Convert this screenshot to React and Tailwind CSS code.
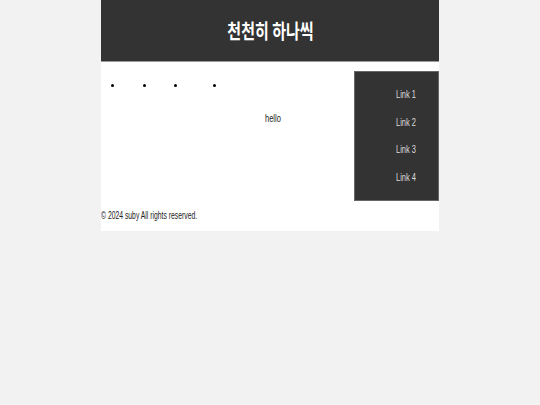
export default function App() {
  const narrow = { fontFamily: '"Liberation Sans", Arial, sans-serif' };
  return (
    <div className="min-h-[405px] w-full bg-[#f2f2f2] antialiased" style={narrow}>
      <div className="mx-auto w-[338px] bg-white">
        <header className="flex h-[62px] items-center justify-center border-b border-[#9a9a9a] bg-[#333333]">
          <h1
            className="inline-block scale-x-75 text-[20px] font-bold text-white"
            style={{ fontFamily: '"Noto Sans CJK KR", "Noto Sans", sans-serif' }}
          >
            천천히 하나씩
          </h1>
        </header>
        <div className="flex pt-[9px]">
          <main className="flex-1">
            <ul className="flex items-center pt-[13px] pl-[10px]">
              <li className="mr-[29px] h-[3px] w-[3px] rounded-full bg-black" />
              <li className="mr-[28px] h-[3px] w-[3px] rounded-full bg-black" />
              <li className="mr-[36px] h-[3px] w-[3px] rounded-full bg-black" />
              <li className="h-[3px] w-[3px] rounded-full bg-black" />
            </ul>
            <p className="mt-[27px] pl-[164px] text-[10px] leading-[10px] text-[#222]">
              <span className="inline-block origin-left scale-x-75">hello</span>
            </p>
          </main>
          <aside className="h-[130px] w-[85px] border border-[#666] bg-[#333333] pt-[18px]">
            <ul className="flex flex-col gap-[17.6px] pl-[41px]">
              {["Link 1", "Link 2", "Link 3", "Link 4"].map((t) => (
                <li key={t} className="text-[10px] leading-[10px] text-[#dcdcdc]">
                  <span className="inline-block origin-left scale-x-75">{t}</span>
                </li>
              ))}
            </ul>
          </aside>
        </div>
        <footer className="pt-[10px] pb-[10px] text-[10px] leading-[10px] text-[#222]">
          <span className="inline-block origin-left scale-x-[0.68] whitespace-nowrap">
            © 2024 suby All rights reserved.
          </span>
        </footer>
      </div>
    </div>
  );
}
